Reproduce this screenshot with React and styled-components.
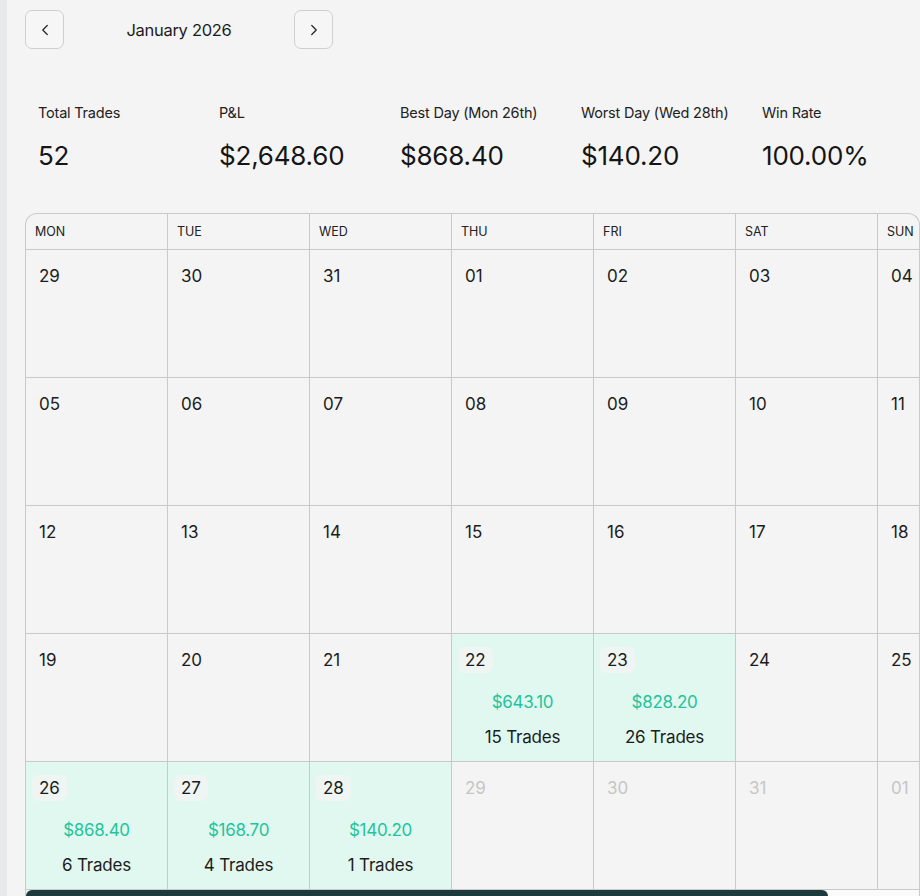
import React from 'react';
import styled, { createGlobalStyle } from 'styled-components';
import { ChevronLeft, ChevronRight } from 'lucide-react';

const GlobalStyle = createGlobalStyle`
  * { box-sizing: border-box; }
  html, body {
    margin: 0;
    padding: 0;
    background: #f4f4f4;
    font-family: Inter, "Noto Sans", sans-serif;
    color: #1c1c1c;
  }
`;

const Page = styled.div`
  display: flex;
  min-height: 896px;
  background: #f4f4f4;
`;

const SideStrip = styled.div`
  width: 7px;
  flex-shrink: 0;
  background: #e7eaea;
`;

const Main = styled.main`
  flex: 1;
  min-width: 0;
  padding: 10px 0 0 18px;
`;

const MonthNav = styled.div`
  display: flex;
  align-items: center;
`;

const NavButton = styled.button`
  width: 39px;
  height: 39px;
  display: flex;
  align-items: center;
  justify-content: center;
  padding: 0;
  border: 1px solid #cfcfcf;
  border-radius: 7px;
  background: #f6f6f6;
  color: #222;
  cursor: pointer;
`;

const MonthTitle = styled.h2`
  width: 230px;
  margin: 0;
  text-align: center;
  font-size: 16.5px;
  font-weight: 400;
  letter-spacing: -0.3px;
`;

const Stats = styled.div`
  display: flex;
  padding: 54px 0 0 13px;
  height: 164px;
`;

const Stat = styled.div`
  width: 181px;
  flex-shrink: 0;
`;

const StatLabel = styled.div`
  font-size: 14.5px;
  letter-spacing: -0.2px;
  line-height: 20px;
  color: #222;
`;

const StatValue = styled.div`
  margin-top: 18px;
  font-size: 26px;
  letter-spacing: -0.2px;
  line-height: 30px;
  font-weight: 380;
  color: #151515;
`;

const CalendarFrame = styled.div`
  border: 1px solid #c9c9c9;
  border-bottom: none;
  border-radius: 12px 12px 0 0;
  overflow: hidden;
`;

const CalendarScroll = styled.div`
  overflow-x: auto;
  overflow-y: hidden;
  scrollbar-width: none;
  &::-webkit-scrollbar {
    display: none;
  }
`;

const ScrollTrack = styled.div`
  height: 10px;
  background: #fafafa;
`;

const ScrollThumb = styled.div`
  height: 100%;
  background: #1d3a3c;
  border-radius: 6px 6px 0 0;
`;

const Grid = styled.div`
  display: grid;
  grid-template-columns: repeat(7, 142px);
  width: 994px;
`;

const DayHead = styled.div`
  height: 36px;
  display: flex;
  align-items: center;
  padding-left: 9px;
  border-right: 1px solid #c9c9c9;
  border-bottom: 1px solid #c9c9c9;
  font-size: 12.5px;
  color: #222;
`;

const Cell = styled.div`
  height: 128px;
  display: flex;
  flex-direction: column;
  align-items: center;
  border-right: 1px solid #c9c9c9;
  border-bottom: 1px solid #c9c9c9;
  background: ${(p) => (p.$win ? '#e1f8f1' : '#f4f4f4')};
`;

const DayNum = styled.span`
  align-self: flex-start;
  margin: 13px 0 0 6px;
  padding: 2px 7px;
  border-radius: 6px;
  background: rgba(244, 244, 244, 0.7);
  font-size: 17px;
  font-weight: 380;
  line-height: 22px;
  color: ${(p) => (p.$muted ? '#c6c6c6' : '#1c1c1c')};
`;

const Amount = styled.div`
  margin-top: 18px;
  font-size: 17px;
  font-weight: 380;
  letter-spacing: -0.3px;
  line-height: 22px;
  color: #1fc49b;
`;

const TradeCount = styled.div`
  margin-top: 13px;
  font-size: 17px;
  font-weight: 380;
  letter-spacing: -0.2px;
  line-height: 22px;
  color: #1c1c1c;
`;

const days = ['MON', 'TUE', 'WED', 'THU', 'FRI', 'SAT', 'SUN'];

const stats = [
  { label: 'Total Trades', value: '52' },
  { label: 'P&L', value: '$2,648.60' },
  { label: 'Best Day (Mon 26th)', value: '$868.40' },
  { label: 'Worst Day (Wed 28th)', value: '$140.20' },
  { label: 'Win Rate', value: '100.00%' },
];

const trades = {
  22: { pnl: '$643.10', count: 15 },
  23: { pnl: '$828.20', count: 26 },
  26: { pnl: '$868.40', count: 6 },
  27: { pnl: '$168.70', count: 4 },
  28: { pnl: '$140.20', count: 1 },
};

const pad = (n) => String(n).padStart(2, '0');

function buildCells() {
  const cells = [];
  [29, 30, 31].forEach((d) => cells.push({ label: pad(d), key: 'p' + d }));
  for (let d = 1; d <= 28; d++) {
    cells.push({ label: pad(d), key: 'c' + d, trade: trades[d] });
  }
  [29, 30, 31, 1].forEach((d) =>
    cells.push({ label: pad(d), key: 'n' + d, muted: true })
  );
  return cells;
}

export default function App() {
  const cells = buildCells();
  // visible share of the 994px grid, for the scroll indicator
  const thumbShare = (893 / 994) * 100;
  return (
    <Page>
      <GlobalStyle />
      <SideStrip />
      <Main>
        <MonthNav>
          <NavButton aria-label="Previous month">
            <ChevronLeft size={18} strokeWidth={1.6} />
          </NavButton>
          <MonthTitle>January 2026</MonthTitle>
          <NavButton aria-label="Next month">
            <ChevronRight size={18} strokeWidth={1.6} />
          </NavButton>
        </MonthNav>

        <Stats>
          {stats.map((s) => (
            <Stat key={s.label}>
              <StatLabel>{s.label}</StatLabel>
              <StatValue>{s.value}</StatValue>
            </Stat>
          ))}
        </Stats>

        <CalendarFrame>
          <CalendarScroll>
            <Grid>
              {days.map((d) => (
                <DayHead key={d}>{d}</DayHead>
              ))}
              {cells.map((c) => (
                <Cell key={c.key} $win={!!c.trade}>
                  <DayNum $muted={c.muted}>{c.label}</DayNum>
                  {c.trade && (
                    <>
                      <Amount>{c.trade.pnl}</Amount>
                      <TradeCount>{c.trade.count} Trades</TradeCount>
                    </>
                  )}
                </Cell>
              ))}
            </Grid>
          </CalendarScroll>
          <ScrollTrack>
            <ScrollThumb style={{ width: `${thumbShare}%` }} />
          </ScrollTrack>
        </CalendarFrame>
      </Main>
    </Page>
  );
}
